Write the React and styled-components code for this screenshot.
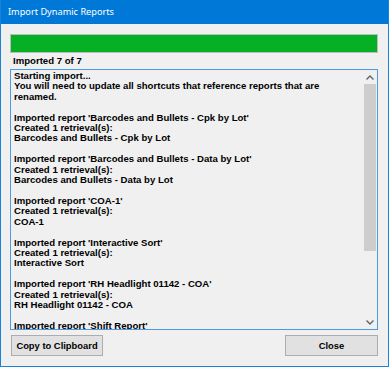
import React from "react";
import styled, { createGlobalStyle } from "styled-components";

const Global = createGlobalStyle`
  html, body { margin: 0; padding: 0; background: #f0f0f0; }
  * { box-sizing: border-box; }
`;

const Window = styled.div`
  width: 389px;
  height: 367px;
  border: 1px solid #1883d7;
  border-top: none;
  background: #f0f0f0;
  display: flex;
  flex-direction: column;
  overflow: hidden;
`;

const TitleBar = styled.div`
  height: 24px;
  flex: none;
  background: #0078d7;
  color: #fff;
  font-family: "Noto Sans", "Liberation Sans", sans-serif;
  font-size: 9.2px;
  display: flex;
  align-items: center;
  padding-left: 7px;
  padding-bottom: 1px;
`;

const Content = styled.div`
  flex: 1;
  display: flex;
  flex-direction: column;
  padding: 10px 10px 10px 9px;
  font-family: "Liberation Sans", Arial, sans-serif;
  font-weight: bold;
  font-size: 9.6px;
  color: #000;
`;

const Progress = styled.div`
  height: 19px;
  border: 1px solid #bcbcbc;
  background: #e6e6e6;
  flex: none;
`;

const ProgressFill = styled.div`
  height: 100%;
  background: #06b025;
`;

const Label = styled.div`
  margin-top: 2px;
  height: 12px;
  line-height: 12px;
  padding-left: 3px;
`;

const TextBox = styled.div`
  margin-top: 2px;
  height: 261px;
  border: 1px solid #4f9be3;
  display: flex;
  flex: none;
`;

const LogText = styled.div`
  flex: 1;
  overflow: hidden;
  white-space: pre;
  line-height: 10.4px;
  padding: 1px 0 0 3px;
`;

const ScrollBar = styled.div`
  width: 14px;
  flex: none;
  display: flex;
  flex-direction: column;
  background: #f0f0f0;
`;

const ArrowButton = styled.div`
  height: 14px;
  flex: none;
  display: flex;
  align-items: center;
  justify-content: center;
`;

const Track = styled.div`
  flex: 1;
  padding: 0 1px 0 1px;
`;

const Thumb = styled.div`
  height: 167px;
  background: #cdcdcd;
`;

const Footer = styled.div`
  margin-top: 5px;
  display: flex;
  justify-content: space-between;
  padding-left: 1px;
`;

const Button = styled.button`
  width: ${(p) => p.$w}px;
  height: 21px;
  background: #e1e1e1;
  border: 1px solid #adadad;
  font-family: "Liberation Sans", Arial, sans-serif;
  font-weight: bold;
  font-size: 9.4px;
  color: #000;
  padding: 0;
  margin: 0;
  white-space: nowrap;
`;

const Chevron = ({ up }) => (
  <svg width="8" height="5" viewBox="0 0 8 5">
    <path
      d={up ? "M0.5 4.5 L4 1 L7.5 4.5" : "M0.5 0.5 L4 4 L7.5 0.5"}
      fill="none"
      stroke="#606060"
      strokeWidth="1.3"
    />
  </svg>
);

const log = [
  "Starting import...",
  "You will need to update all shortcuts that reference reports that are",
  "renamed.",
  "",
  "Imported report 'Barcodes and Bullets - Cpk by Lot'",
  "Created 1 retrieval(s):",
  "Barcodes and Bullets - Cpk by Lot",
  "",
  "Imported report 'Barcodes and Bullets - Data by Lot'",
  "Created 1 retrieval(s):",
  "Barcodes and Bullets - Data by Lot",
  "",
  "Imported report 'COA-1'",
  "Created 1 retrieval(s):",
  "COA-1",
  "",
  "Imported report 'Interactive Sort'",
  "Created 1 retrieval(s):",
  "Interactive Sort",
  "",
  "Imported report 'RH Headlight 01142 - COA'",
  "Created 1 retrieval(s):",
  "RH Headlight 01142 - COA",
  "",
  "Imported report 'Shift Report'",
  "Created 1 retrieval(s):",
  "Shift Report",
].join("\n");

export default function App() {
  return (
    <>
      <Global />
      <Window>
        <TitleBar>Import Dynamic Reports</TitleBar>
        <Content>
          <Progress>
            <ProgressFill style={{ width: "100%" }} />
          </Progress>
          <Label>Imported 7 of 7</Label>
          <TextBox>
            <LogText>{log}</LogText>
            <ScrollBar>
              <ArrowButton>
                <Chevron up />
              </ArrowButton>
              <Track>
                <Thumb />
              </Track>
              <ArrowButton>
                <Chevron />
              </ArrowButton>
            </ScrollBar>
          </TextBox>
          <Footer>
            <Button $w={92}>Copy to Clipboard</Button>
            <Button $w={93}>Close</Button>
          </Footer>
        </Content>
      </Window>
    </>
  );
}
